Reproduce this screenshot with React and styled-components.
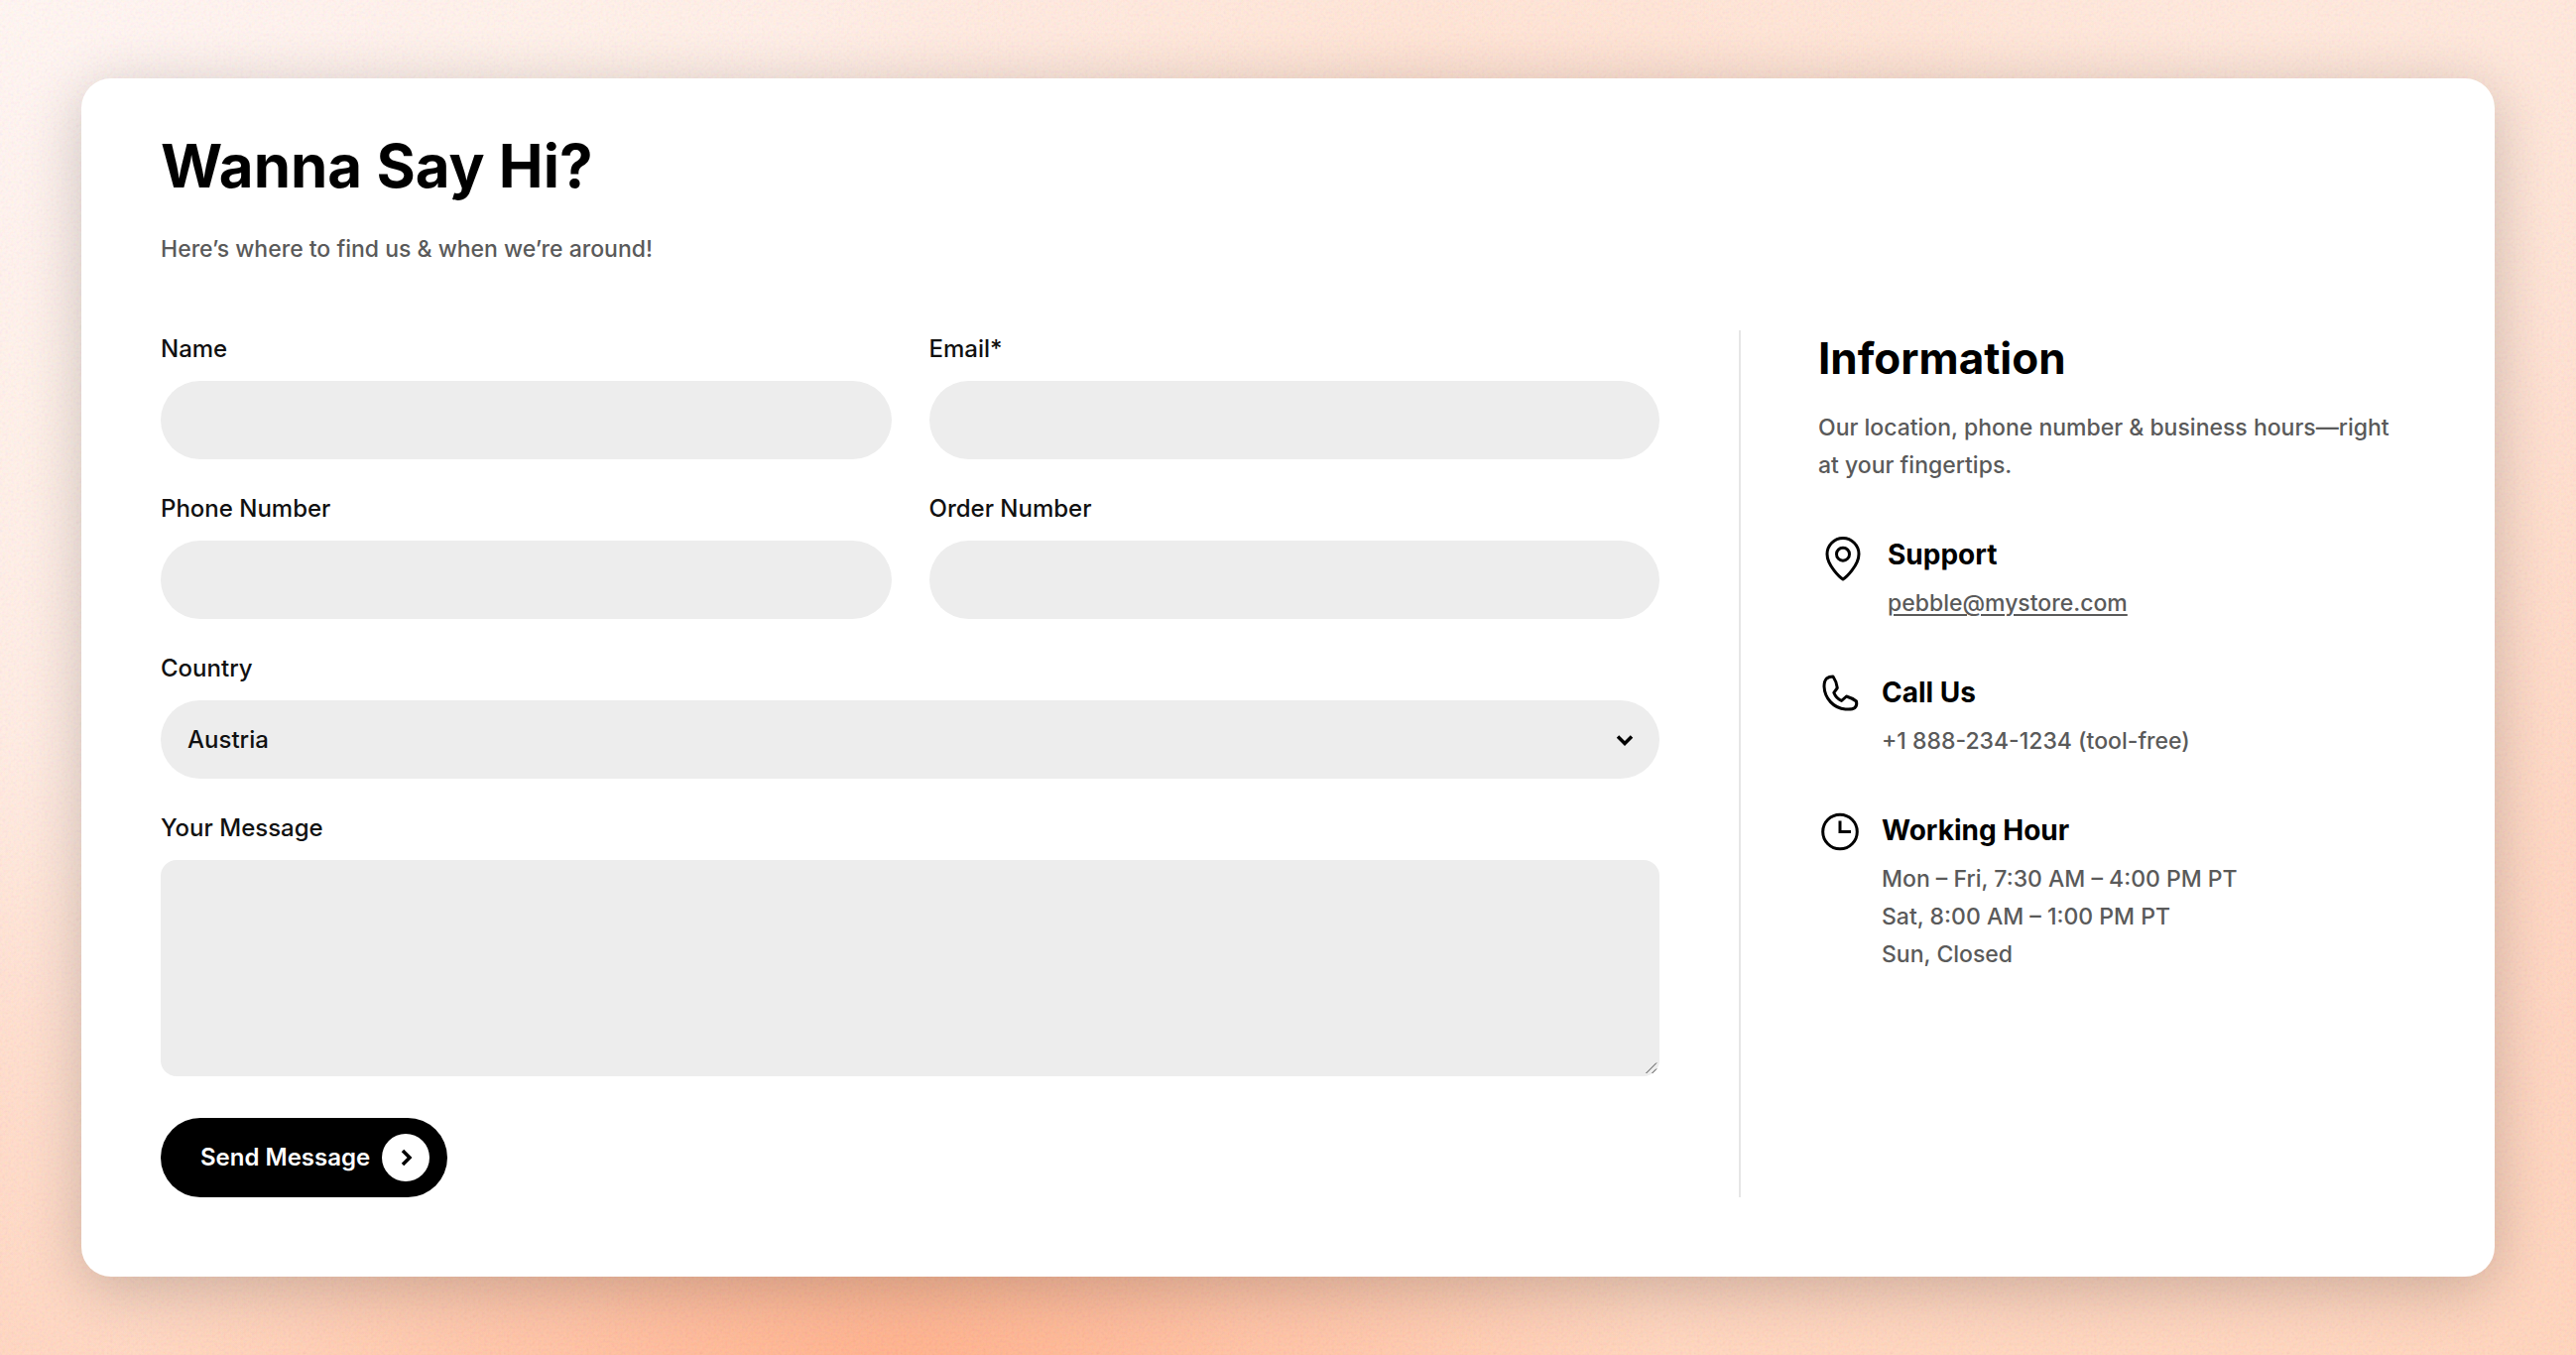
import React from "react";
import styled, { createGlobalStyle } from "styled-components";

const GRAIN =
  "url(\"data:image/svg+xml,%3Csvg xmlns='http://www.w3.org/2000/svg' width='400' height='400'%3E%3Cfilter id='n'%3E%3CfeTurbulence type='fractalNoise' baseFrequency='0.35' numOctaves='2' stitchTiles='stitch'/%3E%3CfeColorMatrix values='1.6 0 0 0 0.1 0 1.6 0 0 0.05 0 0 1.6 0 0 0 0 0 0 0.1'/%3E%3C/filter%3E%3Crect width='400' height='400' filter='url(%23n)'/%3E%3C/svg%3E\")";

const GRIP =
  "url(\"data:image/svg+xml,%3Csvg xmlns='http://www.w3.org/2000/svg' width='15' height='15' fill='none' stroke='%23444'%3E%3Cpath d='M1.5 12L12 1.5M7.5 12L12 7.5'/%3E%3C/svg%3E\")";

const GlobalStyle = createGlobalStyle`
  *, *::before, *::after { box-sizing: border-box; }
  body {
    margin: 0;
    font-family: Inter, "Liberation Sans", sans-serif;
    font-size: 24px;
    font-weight: 500;
    line-height: 38px;
    color: #000;
  }
  h1, h2, h3, p { margin: 0; }
  input, select, textarea, button { font: inherit; color: inherit; }
`;

const Page = styled.main`
  min-height: 100vh;
  padding: 79px 82px;
  background:
    ${GRAIN},
    radial-gradient(ellipse 30% 34% at 35% 103%, #ffa981 0%, rgba(255, 178, 143, 0.65) 45%, rgba(255, 200, 175, 0) 100%),
    radial-gradient(ellipse 14% 50% at 102% 68%, rgba(255, 200, 175, 0.35) 0%, rgba(255, 208, 186, 0) 100%),
    radial-gradient(ellipse 28% 20% at 58% 7%, rgba(255, 214, 192, 0.45) 0%, rgba(255, 222, 206, 0) 100%),
    radial-gradient(ellipse 8% 26% at 0% 82%, rgba(255, 205, 182, 0.35) 0%, rgba(255, 215, 198, 0) 100%),
    radial-gradient(ellipse 75% 105% at 0% 0%, #fff5f2 0%, #ffebe2 50%, rgba(255, 226, 213, 0) 100%),
    linear-gradient(180deg, #ffe6da 0%, #ffdbc9 55%, #ffd2ba 100%);
`;

const Card = styled.section`
  padding: 56px 80px 80px;
  border-radius: 30px;
  background: #fff;
  box-shadow: 0 12px 60px rgba(0, 0, 0, 0.2);
`;

const Title = styled.h1`
  font-size: 60px;
  line-height: 64px;
  font-weight: 700;
`;

const Muted = styled.p`
  font-size: 23px;
  color: #5a5a5a;
`;

const Header = styled.header`
  display: grid;
  gap: 33px;
  margin-bottom: 63px;
`;

const Columns = styled.div`
  display: grid;
  grid-template-columns: minmax(0, 1fr) 682px;
  gap: 80px;
`;

const Form = styled.form`
  display: grid;
  grid-template-columns: repeat(2, minmax(0, 1fr));
  gap: 31px 38px;
`;

const Field = styled.div`
  display: flex;
  flex-direction: column;
  gap: 13px;
  grid-column: ${(p) => (p.$wide ? "1 / -1" : "auto")};
`;

const Label = styled.label`
  color: #111;
`;

const TextInput = styled.input`
  width: 100%;
  height: 79px;
  padding: 0 27px;
  border: 0;
  border-radius: 40px;
  background: #ededed;
`;

const SelectWrap = styled.div`
  position: relative;
  display: grid;
  align-items: center;

  svg {
    position: absolute;
    right: 26px;
    pointer-events: none;
  }
`;

const Select = styled(TextInput)`
  appearance: none;
  color: #111;
`;

const Message = styled.textarea`
  display: block;
  width: 100%;
  height: 218px;
  padding: 20px 27px;
  border: 0;
  border-radius: 16px;
  background: #ededed;
  resize: vertical;

  &::-webkit-resizer {
    background: ${GRIP} no-repeat right bottom;
  }
`;

const SendButton = styled.button`
  display: flex;
  align-items: center;
  justify-self: start;
  gap: 12px;
  height: 80px;
  margin-top: 11px;
  padding: 0 18px 0 40px;
  border: 0;
  border-radius: 40px;
  background: #000;
  color: #fff;
  font-weight: 600;
`;

const Disc = styled.span`
  display: grid;
  place-items: center;
  width: 48px;
  height: 48px;
  border-radius: 50%;
  background: #fff;
  color: #000;
`;

const Info = styled.aside`
  padding-left: 78px;
  border-left: 2px solid #e6e6e6;
`;

const InfoTitle = styled.h2`
  margin-bottom: 23px;
  font-size: 44px;
  line-height: 56px;
  font-weight: 700;
`;

const Intro = styled(Muted)`
  max-width: 596px;
`;

const Contacts = styled.div`
  display: grid;
  gap: 52px;
  margin-top: 52px;
`;

const Contact = styled.div`
  display: flex;
  align-items: flex-start;
  gap: 20px;

  > svg {
    flex: none;
  }
`;

const ContactTitle = styled.h3`
  margin-bottom: 11px;
  font-size: 28px;
  line-height: 38px;
  font-weight: 700;
`;

const MailLink = styled.a`
  color: inherit;
  text-decoration: underline;
  text-decoration-thickness: 2px;
  text-underline-offset: 3px;
`;

const stroke = {
  fill: "none",
  stroke: "currentColor",
  strokeWidth: 3,
  "aria-hidden": true,
};

const PinIcon = () => (
  <svg width="50" height="50" viewBox="0 0 50 50" {...stroke} strokeLinejoin="round">
    <path d="M25 44C22 42.2 9 30 9 18.5A16 16 0 0 1 41 18.5C41 30 28 42.2 25 44Z" />
    <circle cx="25" cy="18.7" r="6.5" />
  </svg>
);

const PhoneIcon = () => (
  <svg width="44" height="44" viewBox="0 0 44 44" {...stroke} strokeLinejoin="round">
    <path d="M8.5 5Q6 7.5 6 13C6.5 25 15.5 35 27.5 36Q34.5 36.5 37 34.5Q39.5 32 38.5 28Q34 24.5 28.5 23L23.5 27.5Q18 25 15.8 19.3L19.3 14.5Q18.5 8 15 3Q11 3 8.5 5Z" />
  </svg>
);

const ClockIcon = () => (
  <svg width="44" height="44" viewBox="0 0 44 44" {...stroke}>
    <circle cx="22" cy="20.5" r="17.3" />
    <path d="M22 9.5V20.5H33" />
  </svg>
);

const ContactItem = ({ icon, title, children }) => (
  <Contact>
    {icon}
    <div>
      <ContactTitle>{title}</ContactTitle>
      {children}
    </div>
  </Contact>
);

const fields = [
  { id: "name", label: "Name", type: "text" },
  { id: "email", label: "Email*", type: "email" },
  { id: "phone", label: "Phone Number", type: "tel" },
  { id: "order", label: "Order Number", type: "text" },
];

export default function App() {
  return (
    <>
      <GlobalStyle />
      <Page>
        <Card>
          <Header>
            <Title>Wanna Say Hi?</Title>
            <Muted>Here’s where to find us &amp; when we’re around!</Muted>
          </Header>
          <Columns>
            <Form onSubmit={(e) => e.preventDefault()}>
              {fields.map((f) => (
                <Field key={f.id}>
                  <Label htmlFor={f.id}>{f.label}</Label>
                  <TextInput id={f.id} name={f.id} type={f.type} />
                </Field>
              ))}
              <Field $wide>
                <Label htmlFor="country">Country</Label>
                <SelectWrap>
                  <Select as="select" id="country" name="country" defaultValue="Austria">
                    <option>Austria</option>
                  </Select>
                  <svg width="18" height="14" viewBox="0 0 18 14" {...stroke} strokeWidth="3.5">
                    <path d="M2 3.5L9 10.5L16 3.5" />
                  </svg>
                </SelectWrap>
              </Field>
              <Field $wide>
                <Label htmlFor="message">Your Message</Label>
                <Message id="message" name="message" />
              </Field>
              <SendButton type="submit">
                Send Message
                <Disc>
                  <svg width="14" height="18" viewBox="0 0 14 18" {...stroke} strokeWidth="3.5">
                    <path d="M4 2L11 9L4 16" />
                  </svg>
                </Disc>
              </SendButton>
            </Form>
            <Info>
              <InfoTitle>Information</InfoTitle>
              <Intro>
                Our location, phone number &amp; business hours—right at your fingertips.
              </Intro>
              <Contacts>
                <ContactItem icon={<PinIcon />} title="Support">
                  <Muted>
                    <MailLink href="mailto:pebble@mystore.com">pebble@mystore.com</MailLink>
                  </Muted>
                </ContactItem>
                <ContactItem icon={<PhoneIcon />} title="Call Us">
                  <Muted>+1 888-234-1234 (tool-free)</Muted>
                </ContactItem>
                <ContactItem icon={<ClockIcon />} title="Working Hour">
                  <Muted>Mon – Fri, 7:30 AM – 4:00 PM PT</Muted>
                  <Muted>Sat, 8:00 AM – 1:00 PM PT</Muted>
                  <Muted>Sun, Closed</Muted>
                </ContactItem>
              </Contacts>
            </Info>
          </Columns>
        </Card>
      </Page>
    </>
  );
}
